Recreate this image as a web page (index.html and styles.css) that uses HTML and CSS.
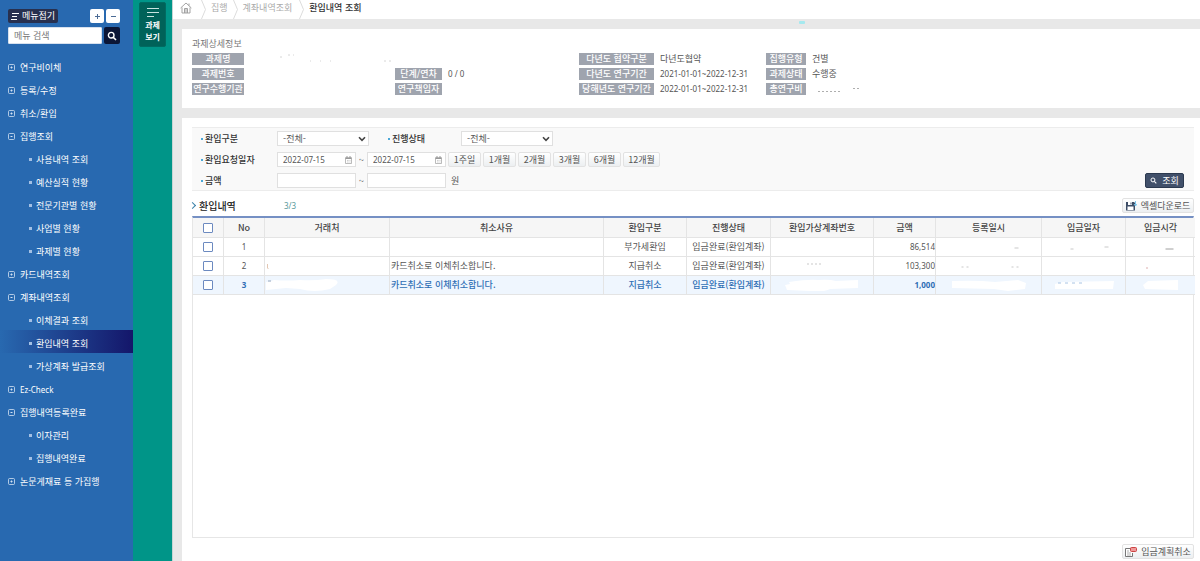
FILE: index.html
```html
<!DOCTYPE html>
<html lang="ko">
<head>
<meta charset="utf-8">
<title>환입내역 조회</title>
<link rel="stylesheet" href="styles.css">
</head>
<body>
<svg class="defs" width="0" height="0" aria-hidden="true">
  <symbol id="plus" viewBox="0 0 7 7"><rect x=".5" y=".5" width="6" height="6" rx="1" fill="none" stroke="currentColor" stroke-width=".8"/><path d="M2.500 3.500h2M3.500 2.500v2" stroke="currentColor" stroke-width="1"/></symbol>
  <symbol id="minus" viewBox="0 0 7 7"><rect x=".5" y=".5" width="6" height="6" rx="1" fill="none" stroke="currentColor" stroke-width=".8"/><path d="M2.500 3.500h2" stroke="currentColor" stroke-width="1"/></symbol>
  <symbol id="search" viewBox="0 0 10 10"><circle cx="4.2" cy="4.2" r="2.8" fill="none" stroke="currentColor" stroke-width="1.4"/><path d="M6.2 6.2L9 9" stroke="currentColor" stroke-width="1.6"/></symbol>
  <symbol id="sep" viewBox="0 0 5 19"><path d="M.5 0L4.5 9.500L.5 19" fill="none" stroke="#dcdcdc" stroke-width="1"/></symbol>
  <symbol id="calendar" viewBox="0 0 7 8"><path d="M.5 1.500h6v6h-6z" fill="none" stroke="#aaa" stroke-width=".8"/><path d="M.5 2.500h6M2 0v2M5 0v2" stroke="#999" stroke-width="1"/><path d="M2 4.500h3.500M2 6h3.500" stroke="#bbb" stroke-width=".7" stroke-dasharray="1 .4"/></symbol>
  <symbol id="arrow" viewBox="0 0 8 6"><path d="M1 1.200L4 4.300L7 1.200" fill="none" stroke="#444" stroke-width="1.600"/></symbol>
</svg>
<div class="app">
  <nav class="side">
    <div class="side-top">
      <button class="fold" type="button"><svg width="8" height="7" viewBox="0 0 8 7"><path d="M1 .5h7M1 3.500h5M0 6.500h6" stroke="#fff" stroke-width="1"/></svg>메뉴접기</button>
      <button class="mini" type="button" aria-label="모두 펼치기"><svg width="5" height="5" viewBox="0 0 5 5"><path d="M0 2.500h5M2.500 0v5" stroke="#4b6b95"/></svg></button>
      <button class="mini" type="button" aria-label="모두 닫기"><svg width="5" height="5" viewBox="0 0 5 5"><path d="M0 2.500h5" stroke="#4b6b95"/></svg></button>
    </div>
    <form class="menu-search">
      <input type="text" placeholder="메뉴 검색" aria-label="메뉴 검색">
      <button type="button" aria-label="검색"><svg width="10" height="10"><use href="#search"/></svg></button>
    </form>
    <ul class="menu">
      <li><a href="#"><svg><use href="#plus"/></svg>연구비이체</a></li>
      <li><a href="#"><svg><use href="#plus"/></svg>등록/수정</a></li>
      <li><a href="#"><svg><use href="#plus"/></svg>취소/환입</a></li>
      <li><a href="#"><svg><use href="#minus"/></svg>집행조회</a>
        <ul>
          <li><a href="#">사용내역 조회</a></li>
          <li><a href="#">예산실적 현황</a></li>
          <li><a href="#">전문기관별 현황</a></li>
          <li><a href="#">사업별 현황</a></li>
          <li><a href="#">과제별 현황</a></li>
        </ul>
      </li>
      <li><a href="#"><svg><use href="#plus"/></svg>카드내역조회</a></li>
      <li><a href="#"><svg><use href="#minus"/></svg>계좌내역조회</a>
        <ul>
          <li><a href="#">이체결과 조회</a></li>
          <li><a href="#" class="current" aria-current="page">환입내역 조회</a></li>
          <li><a href="#">가상계좌 발급조회</a></li>
        </ul>
      </li>
      <li><a href="#" class="latin"><svg><use href="#plus"/></svg>Ez-Check</a></li>
      <li><a href="#"><svg><use href="#minus"/></svg>집행내역등록완료</a>
        <ul>
          <li><a href="#">이자관리</a></li>
          <li><a href="#">집행내역완료</a></li>
        </ul>
      </li>
      <li><a href="#"><svg><use href="#plus"/></svg>논문게재료 등 가집행</a></li>
    </ul>
  </nav>
  <aside class="task">
    <button type="button"><svg width="12" height="9" viewBox="0 0 12 9"><path d="M0 .5h12M0 4.500h12M0 8.500h7" stroke="#c9e4e0"/></svg><span>과제</span><span>보기</span></button>
  </aside>
  <main class="main">
    <nav class="crumbs" aria-label="위치">
      <a href="#" class="home" aria-label="홈"><svg width="12" height="12" viewBox="0 0 12 12" fill="none" stroke="#999" stroke-width=".9"><path d="M.6 6L6 1L11.400 6M2 5.500v5.500h8V5.500M4.500 11V6.500h3V11M6 6.500V11M9 1.500v2"/></svg></a>
      <svg class="sep"><use href="#sep"/></svg>
      <a href="#">집행</a>
      <svg class="sep"><use href="#sep"/></svg>
      <a href="#" class="mid">계좌내역조회</a>
      <svg class="sep"><use href="#sep"/></svg>
      <strong>환입내역 조회</strong>
    </nav>
    <div class="divider"><i class="glint"></i></div>
    <section class="panel detail">
      <h2>과제상세정보</h2>
      <dl>
        <div class="wide w1"><dt>과제명</dt><dd><svg width="160" height="10" viewBox="0 0 160 10" stroke="#ccc" stroke-width=".8" stroke-dasharray="2 3"><path d="M30 4h5M38 2h6M134 8h10"/><path d="M60 8h22" stroke-dasharray="1 9"/></svg></dd></div>
        <div class="w3"><dt>다년도 협약구분</dt><dd>다년도협약</dd></div>
        <div class="w4"><dt>집행유형</dt><dd>건별</dd></div>
        <div class="w1"><dt>과제번호</dt><dd></dd></div>
        <div class="w2"><dt>단계/연차</dt><dd class="num">0 / 0</dd></div>
        <div class="w3"><dt>다년도 연구기간</dt><dd class="num">2021-01-01~2022-12-31</dd></div>
        <div class="w4"><dt>과제상태</dt><dd>수행중</dd></div>
        <div class="w1"><dt>연구수행기관</dt><dd></dd></div>
        <div class="w2"><dt>연구책임자</dt><dd></dd></div>
        <div class="w3"><dt>당해년도 연구기간</dt><dd class="num">2022-01-01~2022-12-31</dd></div>
        <div class="w4"><dt>총연구비</dt><dd><svg width="50" height="10" viewBox="0 0 50 10" stroke="#999" stroke-width=".8" stroke-dasharray="2 2"><path d="M6 8.500h22M41 5.500h6"/></svg></dd></div>
      </dl>
    </section>
    <section class="panel work">
      <form class="filter">
        <div class="row">
          <label class="name" for="kind">환입구분</label>
          <span class="select"><select id="kind"><option>-전체-</option></select><svg width="8" height="6"><use href="#arrow"/></svg></span>
          <label class="name second" for="state">진행상태</label>
          <span class="select"><select id="state"><option>-전체-</option></select><svg width="8" height="6"><use href="#arrow"/></svg></span>
        </div>
        <div class="row">
          <label class="name" for="from">환입요청일자</label>
          <span class="box"><input id="from" type="text" value="2022-07-15"><svg width="7" height="8"><use href="#calendar"/></svg></span>
          <span class="tilde">~</span>
          <span class="box"><input type="text" value="2022-07-15" aria-label="종료일"><svg width="7" height="8"><use href="#calendar"/></svg></span>
          <span class="periods"><button type="button" class="btn">1주일</button><button type="button" class="btn">1개월</button><button type="button" class="btn">2개월</button><button type="button" class="btn">3개월</button><button type="button" class="btn">6개월</button><button type="button" class="btn long">12개월</button></span>
        </div>
        <div class="row">
          <label class="name" for="min">금액</label>
          <span class="box"><input id="min" type="text"></span>
          <span class="tilde">~</span>
          <span class="box"><input type="text" aria-label="최대 금액"></span>
          <span class="unit">원</span>
          <button type="button" class="query"><svg width="7" height="7"><use href="#search"/></svg>조회</button>
        </div>
      </form>
      <div class="list-head">
        <h3>환입내역</h3><span class="count">3/3</span>
        <button type="button" class="btn tool"><svg width="11" height="10" viewBox="0 0 11 10"><path d="M0 1h8l1 1v7.500H0z" fill="#3d4d66"/><path d="M2 1h4v3H2zM1.500 5.500h6V9h-6z" fill="#fff"/><path d="M4.500 1.500h1v2h-1z" fill="#3d4d66"/><path d="M9.500 0v5M8 3l1.500 2L11 3" stroke="#7cc4ea" fill="none"/></svg>엑셀다운로드</button>
      </div>
      <div class="grid">
        <table>
          <colgroup><col class="c31"><col class="c41"><col class="c125"><col class="c214"><col class="c83"><col class="c84"><col class="c103"><col class="c62"><col class="c106"><col class="c84"><col class="c69"></colgroup>
          <thead><tr><th><input type="checkbox" aria-label="전체 선택"></th><th>No</th><th>거래처</th><th>취소사유</th><th>환입구분</th><th>진행상태</th><th>환입가상계좌번호</th><th>금액</th><th>등록일시</th><th>입금일자</th><th>입금시각</th></tr></thead>
          <tbody>
            <tr><td><input type="checkbox" aria-label="1번 선택"></td><td class="num">1</td><td></td><td></td><td>부가세환입</td><td>입금완료(환입계좌)</td><td></td><td class="num money">86,514</td><td><svg class="mark" viewBox="0 0 90 12"><path d="M71 7h4"/></svg></td><td><svg class="mark" viewBox="0 0 70 12"><path d="M22 8h3M56 6h4"/></svg></td><td><svg class="mark dark" viewBox="0 0 60 12"><path d="M35 8h8"/></svg></td></tr>
            <tr><td><input type="checkbox" aria-label="2번 선택"></td><td class="num">2</td><td class="left"><svg width="6" height="12" viewBox="0 0 6 12"><path d="M1.500 4v4l1 1" fill="none" stroke="#dcb9a0" stroke-width=".8"/></svg></td><td class="left">카드취소로 이체취소합니다.</td><td>지급취소</td><td>입금완료(환입계좌)</td><td><svg class="mark" viewBox="0 0 80 12"><path d="M25 4h16" stroke-dasharray="2 2"/></svg></td><td class="num money">103,300</td><td><svg class="mark" viewBox="0 0 90 12"><path d="M18 7h7M68 7h7" stroke-dasharray="2 3"/></svg></td><td></td><td><svg class="mark" viewBox="0 0 60 12"><path d="M16 8h1" stroke="#a33"/></svg></td></tr>
            <tr class="sel"><td><input type="checkbox" aria-label="3번 선택"></td><td class="num">3</td><td class="left"><svg width="74" height="12" viewBox="0 0 74 12"><path d="M0 3Q4 3 8 1Q20 2 34 1Q48 2 60 0Q76 0 70 6Q67 8 64 10Q48 14 34 10L20 9L0 11z" fill="#fff"/><path d="M2 2h3" stroke="#8295ae" stroke-width=".8"/></svg></td><td class="left">카드취소로 이체취소합니다.</td><td>지급취소</td><td>입금완료(환입계좌)</td><td><svg width="74" height="12" viewBox="0 0 74 12"><path d="M0 6L5 5L4 3Q24 0 33 1Q44 0 51 2L73 1V9L45 10Q36 14 25 12L2 11z" fill="#fff"/></svg></td><td class="num money">1,000</td><td><svg width="74" height="12" viewBox="0 0 74 12"><path d="M0 2Q25 1 43 3L66 1L74 4L73 10L56 12L42 10L0 9z" fill="#fff"/></svg></td><td><svg width="60" height="12" viewBox="0 0 60 12"><path d="M1 5L9 3L60 2L59 10L1 10z" fill="#fff"/><path d="M4 4h28" stroke="#a8c4e4" stroke-dasharray="3 4"/></svg></td><td><svg width="36" height="12" viewBox="0 0 36 12"><path d="M0 6L5 2L35 1V11L2 10z" fill="#fff"/></svg></td></tr>
          </tbody>
        </table>
      </div>
      <div class="foot"><button type="button" class="btn tool"><svg width="12" height="10" viewBox="0 0 12 10"><path d="M6 1.500H.5v8h7V6" fill="#fff" stroke="#777"/><path d="M2 4h2M2 6h4M2 8h4" stroke="#999" stroke-width=".8"/><rect x="5.500" y=".5" width="6" height="4" rx="1" fill="#e99" stroke="#c44"/></svg>입금계획취소</button></div>
    </section>
  </main>
</div>
</body>
</html>
```

FILE: styles.css
```css
* { box-sizing: border-box; }

body {
  margin: 0;
  color: #555;
  font: 9px/12px "Noto Sans CJK KR", sans-serif;
}

button, input, select { font: inherit; color: inherit; margin: 0; }
button { cursor: pointer; white-space: nowrap; }
ul, dl, dd, h2, h3 { margin: 0; padding: 0; }
ul { list-style: none; }
a { color: inherit; text-decoration: none; }
svg { display: block; flex: none; }
.defs { position: absolute; }
.num { font-family: "Noto Sans", sans-serif; font-size: 8px; }

.app { display: flex; min-height: 100vh; }

/* Left menu */
.side { flex: none; width: 133px; background: #2869b0; color: #fff; }
.side-top { display: flex; gap: 2px; padding: 9px 13px 0 8px; }
.fold {
  display: flex; align-items: center; justify-content: center; gap: 3px;
  width: 50px; height: 14px; margin-right: auto; padding: 0;
  border: 0; border-radius: 2px; background: #28304f;
}
.mini {
  display: flex; align-items: center; justify-content: center;
  width: 14px; height: 14px; padding: 0;
  border: 0; border-radius: 2px; background: #fff;
}
.menu-search { display: flex; gap: 2px; padding: 4px 13px 10px 8px; }
.menu-search input {
  flex: 1; min-width: 0; height: 17px; padding: 0 5px;
  border: 1px solid #d7e1ee; border-radius: 1px; background: #fff; color: #555;
}
.menu-search input::placeholder { color: #777; opacity: 1; }
.menu-search button {
  display: flex; align-items: center; justify-content: center;
  width: 16px; height: 17px; padding: 0;
  border: 0; border-radius: 2px; background: #0b1636; color: #fff;
}
.menu a {
  display: flex; align-items: center; gap: 5px;
  height: 23px; padding: 4px 0 0 8px; white-space: nowrap;
}
.menu a svg { width: 7px; height: 7px; color: #d3e2f3; }
.menu .latin { font-family: "Noto Sans", sans-serif; font-size: 8px; }
.menu ul a { gap: 4px; padding-left: 29px; }
.menu ul a::before { content: ""; width: 3px; height: 3px; background: #a3c0e4; }
.menu .current { background: linear-gradient(90deg, #2869b0, #14166a); }

/* Project tab */
.task { flex: none; width: 39px; padding: 2px 6px; background: #009588; }
.task button {
  display: flex; flex-direction: column; align-items: center;
  width: 27px; height: 45px; padding: 5px 0 0;
  border: 1px solid #006b62; border-radius: 2px; background: #006259;
  color: #fff; font-size: 8px; font-weight: 700; line-height: 12px;
}
.task svg { margin-bottom: 2px; }

/* Content column */
.main {
  flex: 1; min-width: 0; display: flex; flex-direction: column;
  border-left: 1px solid #c6d4d3; background: #e8e8e8;
}
.crumbs {
  display: flex; align-items: center; height: 19px; padding-left: 7px;
  background: #fff; color: #aaa; white-space: nowrap;
}
.crumbs a, .crumbs strong { padding-bottom: 3px; }
.sep { width: 5px; height: 19px; margin: 0 5px; }
.home + .sep { margin-left: 9px; }
.crumbs .mid { margin-right: 2px; }
.crumbs strong { color: #333; font-weight: 500; }
.divider { height: 10px; padding: 2px 395px 0 0; display: flex; justify-content: flex-end; }
.glint { width: 6px; height: 3px; border-radius: 1px; background: #a5e9ef; }
.panel { margin-left: 9px; background: #fff; }

.detail { padding: 9px 6px 13px 10px; }
.detail h2 { margin-bottom: 3px; color: #777; font-size: 9px; font-weight: 400; }
.detail dl { display: grid; grid-template-columns: 203fr 184fr 187fr 428fr; row-gap: 3px; }
.detail dl div { display: flex; gap: 6px; white-space: nowrap; }
.detail .wide { grid-column: span 2; }
.detail dt {
  height: 12px; background: #9fa4ae; color: #fff;
  font-weight: 500; line-height: 11px; text-align: center;
}
.w1 dt { width: 52px; }
.w2 dt { width: 47px; }
.w3 dt { width: 75px; }
.w4 dt { width: 40px; }

/* Search conditions */
.work {
  flex: 1; display: flex; flex-direction: column;
  margin-top: 10px; padding: 9px 6px 2px 10px;
}
.filter {
  display: flex; flex-direction: column; gap: 6px; padding: 3px 10px 2px 9px;
  border: solid #ececec; border-width: 1px 0; background: #f9f9f9;
}
.row { display: flex; align-items: center; height: 15px; white-space: nowrap; }
.name { position: relative; width: 76px; padding-left: 4px; color: #333; font-weight: 500; }
.name::before {
  content: ""; position: absolute; left: 0; top: 5px;
  width: 2px; height: 2px; background: #4aa8d8;
}
.second { width: 73px; margin-left: 19px; }
.select { position: relative; width: 92px; height: 15px; }
.select select {
  width: 100%; height: 15px; padding: 0 5px;
  border: 1px solid #e0e0e0; border-radius: 0; background: #fff; appearance: none;
}
.select svg { position: absolute; right: 3px; top: 5px; pointer-events: none; }
.box {
  display: flex; align-items: center; width: 79px; height: 15px; padding-right: 3px;
  border: 1px solid #e0e0e0; background: #fff;
}
.box input {
  flex: 1; min-width: 0; height: 13px; padding: 0 5px; border: 0; background: none;
  font-family: "Noto Sans", sans-serif; font-size: 8px;
}
.tilde { width: 11px; text-align: center; }
.periods { display: flex; gap: 2px; margin-left: 2px; }
.btn {
  width: 33px; height: 15px; padding: 0; border: 1px solid #e2e2e2; border-radius: 2px;
  background: linear-gradient(#fff, #eceff1); line-height: 13px;
}
.btn.long { width: 37px; }
.unit { margin-left: 5px; }
.query {
  display: flex; align-items: center; justify-content: center; gap: 5px;
  width: 39px; height: 15px; margin-left: auto; padding: 0;
  border: 1px solid #2c3a50; border-radius: 2px; background: #41506a;
  color: #fff; line-height: 13px;
}

/* Result list */
.list-head { display: flex; align-items: center; padding: 7px 0 3px; }
.list-head h3 {
  display: flex; align-items: center; gap: 4px; width: 92px;
  color: #222; font-size: 10px; font-weight: 500;
}
.list-head h3::before {
  content: ""; width: 4px; height: 4px; margin-left: -2px;
  border: solid #3a80a8; border-width: 1px 1px 0 0; transform: rotate(45deg);
}
.count { color: #5a9a9c; font-family: "Noto Sans", sans-serif; font-size: 8px; }
.tool { display: flex; align-items: center; justify-content: center; gap: 4px; width: 72px; }
.list-head .tool { margin-left: auto; }

.grid { flex: 1; border: 1px solid #e6e6e6; border-top: 2px solid #7590c4; }
table { width: 100%; border-collapse: separate; border-spacing: 0; table-layout: fixed; }
.c31 { width: 31px; }
.c41 { width: 41px; }
.c62 { width: 62px; }
.c69 { width: 69px; }
.c83 { width: 83px; }
.c84 { width: 84px; }
.c103 { width: 103px; }
.c106 { width: 106px; }
.c125 { width: 125px; }
.c214 { width: 214px; }
th, td {
  height: 20px; padding: 0 1px; border: solid #e4e4e4; border-width: 0 1px 1px 0;
  text-align: center; white-space: nowrap; overflow: hidden;
}
td { height: 19px; }
th { background: #f6f6f6; color: #444; font-weight: 500; }
th:last-child, td:last-child { border-right: 0; }
td svg { margin: 0 auto; }
td.left { text-align: left; }
td.left svg { margin: 0; }
td.money { padding-right: 0; text-align: right; }
.sel td { background: #eff6fe; color: #2f6fb5; font-weight: 500; }
.sel .num { font-weight: 700; }
.mark { width: 100%; height: 12px; stroke: #bbb; stroke-width: .8; }
.dark { stroke: #888; }
input[type="checkbox"] {
  display: block; width: 10px; height: 10px; margin: 0 auto;
  border: 1px solid #6c8ac0; border-radius: 1px; background: #fff; appearance: none;
}

.foot { display: flex; justify-content: flex-end; padding-top: 6px; }
```
